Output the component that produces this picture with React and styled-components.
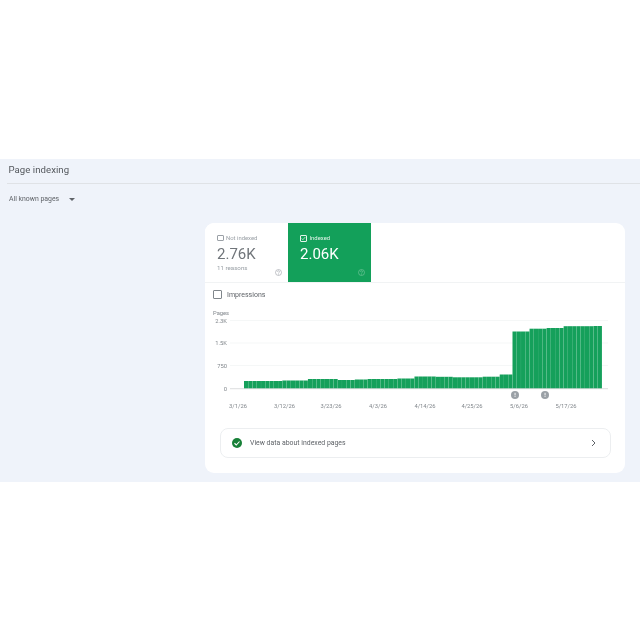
import React from "react";
import styled, { createGlobalStyle } from "styled-components";

const Global = createGlobalStyle`
  html, body { margin: 0; padding: 0; background: #fff; }
  body { font-family: Roboto, "Liberation Sans", sans-serif; color: #5f6368; }
`;

const Page = styled.div`
  width: 640px;
  height: 640px;
  padding-top: 159px;
  box-sizing: border-box;
  background: #fff;
`;
const Panel = styled.main`
  height: 323px;
  background: #eff3fa;
  display: flex;
  flex-direction: column;
  filter: blur(0.35px);
`;
const Header = styled.header`
  height: 24px;
  margin-left: 7px;
  padding-left: 1.5px;
  border-bottom: 1px solid #dfe2e6;
  display: flex;
  align-items: center;
`;
const Title = styled.h1`
  margin: 0;
  font-size: 9.6px;
  font-weight: 400;
  color: #54585d;
  letter-spacing: 0.05px;
  position: relative;
  top: -2px;
`;
const Filter = styled.div`
  display: flex;
  align-items: center;
  gap: 10px;
  height: 30px;
  padding-left: 9px;
  font-size: 6.9px;
  color: #5f6368;
`;
const Caret = styled.span`
  width: 0;
  height: 0;
  border-left: 3px solid transparent;
  border-right: 3px solid transparent;
  border-top: 3px solid #5f6368;
`;
const Card = styled.section`
  width: 420px;
  height: 250px;
  margin: 9px 0 0 205px;
  background: #fff;
  border-radius: 9px;
  overflow: hidden;
  display: flex;
  flex-direction: column;
`;
const Tiles = styled.div`
  display: flex;
  height: 59px;
  flex-shrink: 0;
  border-bottom: 1px solid #f1f3f4;
  box-sizing: content-box;
`;
const Tile = styled.div`
  width: 83px;
  height: 59px;
  box-sizing: border-box;
  padding: 11px 0 0 12px;
  position: relative;
  background: ${(p) => (p.$active ? "#13a05a" : "#fff")};
  color: ${(p) => (p.$active ? "#fff" : "#80868b")};
`;
const TileLabel = styled.div`
  display: flex;
  align-items: center;
  gap: 2.5px;
  height: 8px;
  font-size: 5.9px;
  color: ${(p) => (p.$active ? "#e3f4ea" : "#9aa0a6")};
`;
const Box = styled.span`
  width: ${(p) => p.$size}px;
  height: ${(p) => p.$size}px;
  box-sizing: border-box;
  border: 1px solid ${(p) => p.$color};
  border-radius: 1px;
  flex-shrink: 0;
  display: inline-flex;
  align-items: center;
  justify-content: center;
`;
const TileValue = styled.div`
  margin-top: 3px;
  font-size: 15px;
  line-height: 19px;
  color: ${(p) => (p.$active ? "#fff" : "#70757a")};
`;
const TileSub = styled.div`
  font-size: 6.2px;
  line-height: 9px;
  color: #9aa0a6;
`;
const Help = styled.svg`
  position: absolute;
  right: 6px;
  bottom: 6px;
  width: 7px;
  height: 7px;
`;
const ImpressionsRow = styled.label`
  display: flex;
  align-items: center;
  gap: 5px;
  height: 23px;
  padding-left: 8px;
  font-size: 7px;
  color: #5f6368;
`;
const ChartSvg = styled.svg`
  display: block;
  width: 420px;
  height: 109px;
  flex-shrink: 0;
  text {
    font-family: Roboto, "Liberation Sans", sans-serif;
    font-size: 5.8px;
    fill: #80868b;
  }
`;
const Action = styled.div`
  margin: 13px 14px 0 15px;
  height: 30px;
  box-sizing: border-box;
  border: 1px solid #eceef0;
  border-radius: 8px;
  display: flex;
  align-items: center;
  padding: 0 13px 0 11px;
  font-size: 6.9px;
  color: #5f6368;
`;
const ActionText = styled.span`
  flex: 1;
  margin-left: 8px;
`;

const steps = [
  [244, 381], [279, 380.5], [308, 379], [338, 380], [355, 379.5], [368, 379],
  [394, 378.5], [411, 376.5], [436, 376.8], [453, 377.3], [483, 376.7],
  [500, 374.5], [513, 331.5], [530, 328.7], [543, 328], [560, 326.2],
  [590, 326],
];
const step = 358 / 84;
const bars = Array.from({ length: 84 }, (_, i) => {
  const x = 244 + i * step;
  let top = 381;
  for (const [sx, t] of steps) if (x + 0.5 >= sx) top = t;
  return { x, top };
});
const OX = 205;
const OY = 306;

const xLabels = [
  ["3/1/26", 238], ["3/12/26", 284.5], ["3/23/26", 331], ["4/3/26", 378],
  ["4/14/26", 425], ["4/25/26", 472], ["5/6/26", 519], ["5/17/26", 566],
];
const yLabels = [["2.3K", 320.5], ["1.5K", 343], ["750", 365.5], ["0", 388.5]];

function Chart() {
  return (
    <ChartSvg viewBox={`${OX} ${OY} 420 109`}>
      <text x="213" y="315">Pages</text>
      {yLabels.map(([t, y]) => (
        <g key={t}>
          <text x="227" y={y + 2} textAnchor="end">{t}</text>
          {t !== "0" && <line x1="230" x2="608" y1={y} y2={y} stroke="#f1f3f4" strokeWidth="0.7" />}
        </g>
      ))}
      {bars.map((b) => (
        <rect key={b.x} x={b.x} y={b.top} width={step - 0.08} height={388.5 - b.top} fill="#15a05b" />
      ))}
      <line x1="230" x2="608" y1="388.7" y2="388.7" stroke="#c4c7ca" strokeWidth="0.6" />
      {xLabels.map(([t, x]) => (
        <text key={t} x={x} y="408" textAnchor="middle">{t}</text>
      ))}
      {[515, 545].map((x) => (
        <g key={x}>
          <circle cx={x} cy="395" r="4" fill="#9aa0a6" />
          <rect x={x - 0.4} y="392.8" width="0.9" height="2.6" fill="#fff" />
          <rect x={x - 0.4} y="396" width="0.9" height="0.9" fill="#fff" />
        </g>
      ))}
    </ChartSvg>
  );
}

function HelpIcon({ color }) {
  return (
    <Help viewBox="0 0 14 14">
      <circle cx="7" cy="7" r="6" fill="none" stroke={color} strokeWidth="1.2" />
      <path d="M5 5.6a2 2 0 1 1 3 1.7c-.7.4-1 .8-1 1.5" fill="none" stroke={color} strokeWidth="1.2" />
      <circle cx="7" cy="10.5" r=".8" fill={color} />
    </Help>
  );
}

export default function App() {
  return (
    <Page>
      <Global />
      <Panel>
        <Header><Title>Page indexing</Title></Header>
        <Filter>All known pages<Caret /></Filter>
        <Card>
          <Tiles>
            <Tile>
              <TileLabel><Box $size={6.5} $color="#9aa0a6" />Not indexed</TileLabel>
              <TileValue>2.76K</TileValue>
              <TileSub>11 reasons</TileSub>
              <HelpIcon color="#9aa0a6" />
            </Tile>
            <Tile $active>
              <TileLabel $active>
                <Box $size={7} $color="#e3f4ea">
                  <svg width="5" height="5" viewBox="0 0 8 8" style={{ flexShrink: 0 }}>
                    <path d="M1 4l2 2 4-4.5" fill="none" stroke="#e3f4ea" strokeWidth="1.1" />
                  </svg>
                </Box>
                Indexed
              </TileLabel>
              <TileValue $active>2.06K</TileValue>
              <HelpIcon color="#7fcba3" />
            </Tile>
          </Tiles>
          <ImpressionsRow><Box $size={9} $color="#80868b" />Impressions</ImpressionsRow>
          <Chart />
          <Action>
            <svg width="10" height="10" viewBox="0 0 20 20">
              <circle cx="10" cy="10" r="10" fill="#188038" />
              <path d="M5 10.5l3.5 3.5L15 7" fill="none" stroke="#fff" strokeWidth="2.2" />
            </svg>
            <ActionText>View data about indexed pages</ActionText>
            <svg width="7" height="8" viewBox="0 0 7 8">
              <path d="M2 1l3 3-3 3" fill="none" stroke="#5f6368" strokeWidth="1" />
            </svg>
          </Action>
        </Card>
      </Panel>
    </Page>
  );
}
